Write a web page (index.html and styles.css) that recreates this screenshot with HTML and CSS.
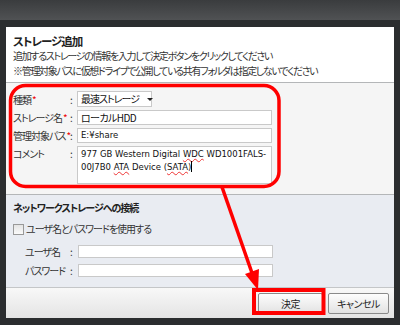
FILE: index.html
```html
<!DOCTYPE html>
<html lang="ja">

<head>
    <meta charset="UTF-8">
    <title>ストレージ追加</title>
    <link rel="stylesheet" href="styles.css">
</head>

<body>
    <div class="window">
        <div class="titlebar"></div>
        <div class="frame">
            <div class="dialog">
                <div class="head">
                    <h1>ストレージ追加</h1>
                    <p>追加するストレージの情報を入力して決定ボタンをクリックしてください</p>
                    <p>※管理対象パスに仮想ドライブで公開している共有フォルダは指定しないでください</p>
                </div>

                <div class="form">
                    <div class="row">
                        <div class="label">種類<span class="req">*</span></div>
                        <div class="colon">:</div>
                        <div class="select">最速ストレージ<span class="caret"></span></div>
                    </div>
                    <div class="row">
                        <div class="label">ストレージ名<span class="req">*</span></div>
                        <div class="colon">:</div>
                        <div class="input">ローカルHDD</div>
                    </div>
                    <div class="row">
                        <div class="label">管理対象パス<span class="req">*</span></div>
                        <div class="colon">:</div>
                        <div class="input latin">E:¥share</div>
                    </div>
                    <div class="row top">
                        <div class="label">コメント</div>
                        <div class="colon">:</div>
                        <div class="textarea latin">977 GB Western Digital <span class="typo">WDC</span> WD1001FALS-<br>00J7B0 <span class="typo">ATA</span> Device (<span class="typo">SATA</span>)<span class="cursor"></span><span class="grip"></span></div>
                    </div>
                </div>

                <div class="network">
                    <h2>ネットワークストレージへの接続</h2>
                    <div class="check"><span class="box"></span>ユーザ名とパスワードを使用する</div>
                    <div class="row sub">
                        <div class="label">ユーザ名</div>
                        <div class="colon">:</div>
                        <div class="input"></div>
                    </div>
                    <div class="row sub">
                        <div class="label">パスワード</div>
                        <div class="colon">:</div>
                        <div class="input"></div>
                    </div>
                </div>

                <div class="footer">
                    <button class="btn ok">決定</button>
                    <button class="btn">キャンセル</button>
                </div>
            </div>
        </div>

        <!-- 注釈（赤枠と矢印） -->
        <svg class="marks" width="400" height="325" viewBox="0 0 400 325">
            <rect x="10.5" y="85.5" width="268.5" height="101" rx="15" fill="none" stroke="#f00" stroke-width="3.5"/>
            <line x1="222" y1="187" x2="252" y2="273" stroke="#f00" stroke-width="3.5"/>
            <polygon points="258,290 245,274 259,269" fill="#f00"/>
            <rect x="254" y="290" width="69.5" height="23" fill="none" stroke="#f00" stroke-width="4"/>
        </svg>
    </div>
</body>

</html>
```

FILE: styles.css
```css
body {
    margin: 0;
    background-color: #2e3032;
    font-family: "Noto Sans CJK JP", sans-serif;
    font-size: 10px;
    color: #333;
}

.window {
    position: relative;
    width: 400px;
    height: 325px;
    overflow: hidden;
}

.titlebar {
    height: 20px;
    background: linear-gradient(#3a3c3e, #505254);
}

.frame {
    height: 305px;
    padding: 7px 6px 0 6px;
    box-sizing: border-box;
    background-color: #2b2d2f;
}

.dialog {
    width: 388px;
    height: 291px;
    background-color: #fff;
    display: flex;
    flex-direction: column;
}

.head {
    height: 56px;
    padding: 7px 7px 0 7px;
    box-sizing: border-box;
    border-bottom: 1px solid #b4b6b8;
}

h1 {
    margin: 0;
    font-size: 11.5px;
    font-weight: bold;
    line-height: 14px;
    letter-spacing: -1px;
    color: #222;
    font-feature-settings: "palt";
}

.head p {
    margin: 0;
    line-height: 15px;
    letter-spacing: -1.3px;
    font-feature-settings: "palt";
    white-space: nowrap;
}

.form {
    height: 112px;
    padding: 8px 7px 0 7px;
    box-sizing: border-box;
    background-color: #f5f5f5;
    border-bottom: 1px solid #b4b6b8;
    display: flex;
    flex-direction: column;
    gap: 3px;
}

.row {
    display: flex;
    align-items: center;
    font-feature-settings: "palt";
}

.row.top {
    align-items: flex-start;
}

.label {
    width: 57px;
    white-space: nowrap;
    line-height: 15px;
    letter-spacing: -1px;
}

.req {
    color: #e00;
    font-size: 10px;
    letter-spacing: 0;
    margin-left: 1px;
}

.colon {
    width: 7px;
    line-height: 15px;
}

.select,
.input,
.textarea {
    box-sizing: border-box;
    background-color: #fff;
    border: 1px solid #c9c9c9;
    color: #111;
    padding: 0 3px;
    white-space: nowrap;
}

.select {
    width: 75px;
    height: 16px;
    line-height: 14px;
    letter-spacing: -1px;
    display: flex;
    align-items: center;
    gap: 8px;
}

.caret {
    width: 0;
    height: 0;
    border-left: 3px solid transparent;
    border-right: 3px solid transparent;
    border-top: 3px solid #222;
}

.input {
    width: 195px;
    height: 15px;
    line-height: 13px;
    letter-spacing: -0.6px;
}

.latin {
    font-family: "DejaVu Sans", sans-serif;
    font-size: 8.5px;
    letter-spacing: 0;
}

.textarea {
    position: relative;
    width: 195px;
    height: 38px;
    padding-top: 1px;
    line-height: 13px;
}

.typo {
    text-decoration: underline wavy #e33;
    text-decoration-thickness: 1px;
}

.cursor {
    display: inline-block;
    width: 1px;
    height: 11px;
    background-color: #000;
    vertical-align: -2px;
}

.grip {
    position: absolute;
    right: 2px;
    bottom: 2px;
    width: 6px;
    height: 6px;
    background-image: radial-gradient(#aaa 35%, transparent 40%);
    background-size: 2px 2px;
}

.network {
    flex: 1;
    padding: 5px 7px 0 7px;
    background-color: #e9ecf2;
    border-bottom: 1px solid #c4c6c8;
}

h2 {
    margin: 0 0 6px 0;
    font-size: 10px;
    font-weight: bold;
    line-height: 16px;
    letter-spacing: -1px;
    color: #222;
    font-feature-settings: "palt";
}

.check {
    display: flex;
    align-items: center;
    gap: 2px;
    line-height: 14px;
    letter-spacing: -1px;
    margin-bottom: 8px;
    font-feature-settings: "palt";
}

.box {
    width: 9px;
    height: 9px;
    border: 1px solid #999;
    background: linear-gradient(#e4e4e4, #fafafa);
}

.row.sub {
    margin-bottom: 4px;
}

.row.sub .label {
    padding-left: 12px;
    width: 45px;
}

.row.sub .colon {
    width: 8px;
}

.row.sub .input {
    height: 13px;
}

.footer {
    height: 30px;
    background: linear-gradient(#f8f8f8, #e4e4e4);
    display: flex;
    justify-content: flex-end;
    align-items: center;
    gap: 5px;
    padding-right: 5px;
}

.btn {
    height: 21px;
    border: 1px solid #8a8a8a;
    border-radius: 2px;
    background: linear-gradient(#fdfdfd, #e2e2e2);
    font-family: "Noto Sans CJK JP", sans-serif;
    font-size: 10px;
    letter-spacing: -0.5px;
    color: #222;
    padding: 0;
    font-feature-settings: "palt";
}

.btn.ok {
    width: 65px;
}

.btn + .btn {
    width: 61px;
}

.marks {
    position: absolute;
    top: 0;
    left: 0;
    pointer-events: none;
}
```
